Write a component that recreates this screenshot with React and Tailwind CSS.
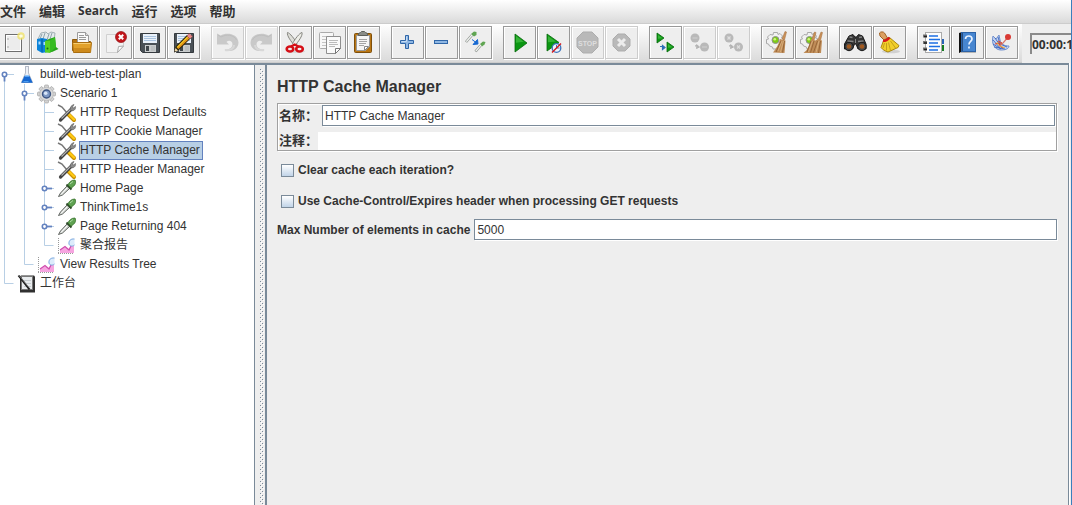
import React from 'react';

/* ---------- toolbar drawings, all on a 23 x 23 grid ---------- */

const Svg = ({ children }) => (
  <svg viewBox="0 0 23 23" className="block size-[23px]" aria-hidden="true">
    {children}
  </svg>
);

const NewIcon = () => (
  <Svg>
    <rect x="3.5" y="3.5" width="16" height="17" fill="#e9e9e9" stroke="#6f6f6f" />
    <rect x="4.5" y="4.5" width="14" height="15" fill="#ececec" stroke="#fff" />
    <path d="M5 8h2M5 16h2" stroke="#aaa" />
    <circle cx="19" cy="5" r="3.800" fill="#f1e36a" opacity=".8" />
    <circle cx="19" cy="5" r="1.8" fill="#fffde0" />
  </Svg>
);

const TemplatesIcon = () => (
  <Svg>
    <path d="M2 8l3-6 5-1 2 2 3-2 4 1-1 8-9 4z" fill="#e4eaec" stroke="#a3b0b5" />
    <path d="M6 3l-2 5M9 2L7 8M13 3l-2 6M16 2l-2 6" stroke="#8fa3ab" />
    <path d="M1 8l5-1 5 1v13l-5 1-5-3z" fill="#0c83d9" />
    <path d="M6 8v13" stroke="#075a9d" fill="none" />
    <path d="M2.500 10.500h2v3h-2zM7.500 11h2v3h-2z" fill="#a9dcff" />
    <path d="M9 10l4-2 6-2 1 10 2.500 2-6.500 3-7 .5z" fill="#27a31b" />
    <path d="M9 10l5-.5V22l-5-1z" fill="#58d126" />
    <path d="M14 9.500l5-3.500 1 10-6 6z" fill="#35bc20" />
    <circle cx="11.500" cy="17.500" r="1" fill="#176b0e" />
  </Svg>
);

const OpenIcon = () => (
  <Svg>
    <path d="M2.500 8.500h6l1 2h11v9h-18z" fill="#b87512" stroke="#8e5a0c" />
    <path d="M7.500 1.500h8l3 3v9h-11z" fill="#fafafa" stroke="#9a9a9a" />
    <path d="M9 4.500h5M9 6.500h7M9 8.500h7" stroke="#999" />
    <path d="M15.500 1.500v3h3" fill="#ddd" stroke="#9a9a9a" />
    <path d="M2.500 11.500h19l-1 10h-17z" fill="#e2a12b" stroke="#a96d10" />
    <path d="M3.500 12.500h17" stroke="#f6cd72" />
    <path d="M4 17h17l-.5 4h-16z" fill="#cd8a1c" />
  </Svg>
);

const CloseIcon = () => (
  <Svg>
    <path d="M2.500 3.500h17v12l-6 6h-11z" fill="#f2f2f2" stroke="#d0d0d0" />
    <path d="M13.500 21.500l1-6 5-.5z" fill="#fff" stroke="#aaa" />
    <circle cx="17" cy="6" r="5.500" fill="#c3161b" stroke="#8f1013" strokeWidth=".7" />
    <path d="M14.800 3.800l4.400 4.400M19.200 3.800l-4.400 4.400" stroke="#fff" strokeWidth="2" />
  </Svg>
);

const Floppy = () => (
  <g>
    <path d="M2.500 2.500h19v19h-17l-2-2z" fill="#4a5157" stroke="#353a3e" />
    <rect x="5" y="3" width="14" height="9" fill="#e9f1fa" />
    <path d="M6 5.500h12M6 7.500h12M6 9.500h12" stroke="#a9c3df" />
    <rect x="7" y="14" width="11" height="7" fill="#c9cccd" />
    <rect x="8" y="15" width="3" height="5" fill="#3f464b" />
    <path d="M14 15v5M16 15v5" stroke="#aeb2b4" />
  </g>
);

const SaveIcon = () => (
  <Svg>
    <Floppy />
  </Svg>
);

const SaveAsIcon = () => (
  <Svg>
    <Floppy />
    <path d="M2 21l2-6L15 4l4 3L7 19z" fill="#2a2208" />
    <path d="M4.500 16L15.500 5l1.500 1.300L6 17.500z" fill="#f4c323" />
    <path d="M6.500 18L18 7l-1-1L5.500 17z" fill="#e69318" />
    <path d="M15 5l2-2.500 3.500 2.800L18 8z" fill="#e98b8b" stroke="#8d3b3b" strokeWidth=".5" />
    <path d="M2 21.500l1.500-4.500 2.500 2.500z" fill="#f0d9a8" />
    <path d="M2 21.500l.6-2 1.300 1.200z" fill="#111" />
  </Svg>
);

const UndoShape = () => (
  <g>
    <path
      d="M1 2.500l3.500 2C10 1 22 2 22.500 11.500c0 5-4 8-8 8.500-3 0-5-.5-6-1.500 4 .5 8-1.500 8-5 0-4-4-4.500-6-2.500l2.500 2.500H1z"
      fill="#c9c9c9"
    />
    <path d="M2 4l3 2C10 3 18 3.500 20.500 9" fill="none" stroke="#bebebe" />
    <path d="M9 19c4 1 9-1 9-5" fill="none" stroke="#d8d8d8" strokeWidth="2" />
  </g>
);

const UndoIcon = () => (
  <Svg>
    <UndoShape />
  </Svg>
);

const RedoIcon = () => (
  <Svg>
    <g transform="translate(23 0) scale(-1 1)">
      <UndoShape />
    </g>
  </Svg>
);

const CutIcon = () => (
  <Svg>
    <ellipse cx="12" cy="20.500" rx="9" ry="1.500" fill="#d5d5d5" />
    <path d="M3.500 1.500c-1 3 4 9.500 7 13l2.500-2C10.500 8 6 2 3.500 1.500z" fill="#deded8" stroke="#85857f" strokeWidth="1" />
    <path d="M18 1.500c1 3-4 9.500-7 13l-2.500-2C11 8 15.500 2 18 1.500z" fill="#eeeee8" stroke="#85857f" strokeWidth="1" />
    <ellipse cx="6" cy="18" rx="3.300" ry="2.500" fill="#eee" stroke="#d50f16" strokeWidth="2.600" />
    <ellipse cx="15.500" cy="18" rx="3.300" ry="2.500" fill="#eee" stroke="#d50f16" strokeWidth="2.600" />
    <path d="M7 15.500l3.700-2 3.800 2" stroke="#d50f16" strokeWidth="2" fill="none" />
  </Svg>
);

const CopyIcon = () => (
  <Svg>
    <rect x="1.500" y="1.500" width="14" height="16" rx="1" fill="#f7f7f7" stroke="#aaa" />
    <path d="M4 5.500h9M4 8.500h4M4 11.500h4M4 14.500h4" stroke="#c4c4c4" />
    <path d="M8.500 5.500h14v12l-5 5h-9z" fill="#fafafa" stroke="#8f8f8f" />
    <path d="M11 9.500h9M11 11.500h8M11 13.500h9M11 15.500h6" stroke="#bbb" />
    <path d="M17.500 22.500v-5h5z" fill="#fff" stroke="#777" />
  </Svg>
);

const PasteIcon = () => (
  <Svg>
    <rect x="2.500" y="2.500" width="17" height="19" rx="1" fill="#b97613" stroke="#7d4e0b" />
    <path d="M4.500 4.500h13v11l-4 4h-9z" fill="#f6f6f6" stroke="#999" />
    <path d="M7 8.500h8M7 10.500h8M7 12.500h7M7 14.500h5" stroke="#a5a5a5" />
    <path d="M12.500 19.500v-4h4z" fill="#fff" stroke="#888" />
    <path d="M6.500 4.500v-2l2-1 1-1h3l1 1 2 1v2z" fill="#8a8d88" stroke="#5c5f5a" />
  </Svg>
);

const PlusIcon = () => (
  <Svg>
    <path d="M9.500 4.500h3v5h5v3h-5v5h-3v-5h-5v-3h5z" fill="#8fb7e3" stroke="#2f66a8" />
    <path d="M10.500 5.500v5h-5" fill="none" stroke="#c5dcf4" />
  </Svg>
);

const MinusIcon = () => (
  <Svg>
    <rect x="4.500" y="9.500" width="13" height="3" fill="#8fb7e3" stroke="#2f66a8" />
  </Svg>
);

const ToggleIcon = () => (
  <Svg>
    <path d="M2 11l6-7" stroke="#8a8f8a" strokeWidth="2.600" />
    <path d="M2.300 10.600l6-7" stroke="#f4f7f4" strokeWidth="1.400" />
    <path d="M7 3l3-2.500 2.500.5v3L10 5.500z" fill="#60a552" />
    <path d="M11.500 20.500l5-6" stroke="#8a8f8a" strokeWidth="2.600" />
    <path d="M11.800 20.100l5-6" stroke="#f4f7f4" strokeWidth="1.400" />
    <path d="M16 13l3-2.500 2.500.5-1 2.500-2.500 2z" fill="#60a552" />
    <path d="M8 8.500l4 3M13.500 8.500l.5 4.500-5 .5z" stroke="#1769d2" fill="#1769d2" />
  </Svg>
);

const Triangle = ({ x, y, w, h }) => (
  <g>
    <path d={`M${x} ${y}l${w} ${h / 2}l${-w} ${h / 2}z`} fill="#0b9612" stroke="#08690c" strokeWidth=".8" />
    <path d={`M${x + 1} ${y + 2}l${w * 0.65} ${h * 0.32}l${-w * 0.65} ${h * 0.05}z`} fill="#4cc54a" opacity=".65" />
  </g>
);

const StartIcon = () => (
  <Svg>
    <Triangle x={7} y={3} w={12} h={18} />
  </Svg>
);

const StartNoPauseIcon = () => (
  <Svg>
    <Triangle x={5} y={3} w={12} h={17} />
    <circle cx="14.500" cy="17" r="4.300" fill="#eef4fc" stroke="#3b72bb" strokeWidth="1.300" />
    <path d="M14.500 14v3h3" fill="none" stroke="#3b72bb" />
    <path d="M10 21.500l9-9" stroke="#d4171d" strokeWidth="1.500" />
  </Svg>
);

const StopIcon = () => (
  <Svg>
    <path d="M7 1h9l6 6v9l-6 6H7l-6-6V7z" fill="#b9b9b9" stroke="#adadad" />
    <text
      x="11.500"
      y="15"
      textAnchor="middle"
      fontSize="7"
      fontWeight="700"
      fill="#dedede"
      className="font-['Liberation_Sans',sans-serif]"
    >
      STOP
    </text>
  </Svg>
);

const ShutdownIcon = () => (
  <Svg>
    <path d="M8 3h7l5 5v7l-5 5H8l-5-5V8z" fill="#b9b9b9" stroke="#adadad" />
    <path d="M8 8l7 7M15 8l-7 7" stroke="#ececec" strokeWidth="3" />
  </Svg>
);

const RemoteStartIcon = () => (
  <Svg>
    <Triangle x={3} y={2} w={7} h={10} />
    <Triangle x={13} y={11} w={7} h={10} />
    <path d="M6 15.500h3M8.500 14.500l2.500 2-2.500 2z" stroke="#2e6fb7" strokeWidth="1.200" fill="#2e6fb7" />
  </Svg>
);

const RemoteArrow = () => <path d="M7 15h2l-.5 2.500 3-1.500-3-2.500" stroke="#b3b3b3" fill="#b3b3b3" />;

const RemoteStopIcon = () => (
  <Svg>
    <circle cx="7" cy="7" r="4.500" fill="#b9b9b9" />
    <circle cx="16.500" cy="16" r="4.500" fill="#b9b9b9" />
    <path d="M4.500 7h5M14 16h5" stroke="#c9c9c9" strokeWidth="1.500" />
    <RemoteArrow />
  </Svg>
);

const RemoteShutdownIcon = () => (
  <Svg>
    <circle cx="7" cy="7" r="4.500" fill="#b9b9b9" />
    <circle cx="16.500" cy="16" r="4.500" fill="#b9b9b9" />
    <path d="M5.500 5.500l3 3M8.500 5.500l-3 3M15 14.500l3 3M18 14.500l-3 3" stroke="#dedede" strokeWidth="1.200" />
    <RemoteArrow />
  </Svg>
);

const GearBase = () => (
  <g>
    <path
      d="M7.500 1.500h4l.5 2 2-1 2.500 2.500-1 2 2 .5v4l-2 .5-1 3-3 1-.5 2h-4l-.5-2-3-1-1-2-2-.5v-4l2-.5-1-2L4 3.500l3 .5z"
      fill="#f1f1f1"
      stroke="#a9a9a9"
    />
    <circle cx="9.500" cy="9" r="3.500" fill="#7ecb17" stroke="#8f8f8f" />
    <circle cx="8.800" cy="8.300" r="1.300" fill="#d0f47f" />
  </g>
);

const ClearIcon = () => (
  <Svg>
    <GearBase />
    <path d="M19 .5l1.500.5-2 8-2.500-1z" fill="#c99058" stroke="#a06c3a" strokeWidth=".5" />
    <path d="M14 8l5.500 1.500L18.500 22l-11.500-.5c3-4 6-8 7-13.500z" fill="#bf8c57" />
    <path d="M15 10l-5 11M18.500 10l-2 11.500" stroke="#8d5c30" strokeWidth=".8" />
    <path d="M16 10l-4 10M17.500 10l-3 11" stroke="#e1ba88" strokeWidth=".7" />
  </Svg>
);

const ClearAllIcon = () => (
  <Svg>
    <GearBase />
    <path d="M14.500 1l1.500.5-2 8-2.500-1zM21 1l1.500.5-2 8-2.500-1z" fill="#c99058" stroke="#a06c3a" strokeWidth=".5" />
    <path d="M11 8l4.500 1.500 2-1.500 4.500 1.500-1 12.500H3.500c4-3 6.500-8 7.500-14z" fill="#bf8c57" />
    <path d="M11 10L7 21M14 10l-3.500 11.500M17.500 10l-4 11.500M20.500 10l-2 12" stroke="#8d5c30" strokeWidth=".8" />
    <path d="M12.500 10l-4 11M19 10l-3 11.500" stroke="#e1ba88" strokeWidth=".7" />
  </Svg>
);

const SearchIcon = () => (
  <Svg>
    <path d="M5 5l4-1.500 2 2.500h1.500l2-2.500 4 1.500 3.500 8v5h-8l-2-5h-1.500l-2 5H.500v-5z" fill="#353535" stroke="#1b1b1b" />
    <path d="M5.500 6l3 .5M15 6.500l3-.5M3.500 10l6 .5M14 10.500l5.500-.5" stroke="#858585" strokeWidth="1.300" />
    <circle cx="5" cy="15.500" r="4.200" fill="#474747" stroke="#191919" />
    <circle cx="18" cy="15.500" r="4.200" fill="#474747" stroke="#191919" />
    <circle cx="5" cy="15.500" r="2.300" fill="#a25a20" />
    <circle cx="18" cy="15.500" r="2.300" fill="#a25a20" />
    <path d="M11.500 8v4" stroke="#888" />
  </Svg>
);

const BroomIcon = () => (
  <Svg>
    <ellipse cx="13" cy="20.500" rx="9" ry="1.800" fill="#d0d0d0" />
    <path d="M1.500 2c1-1.500 4-1.500 5 0l3 5-3.500 2-4-4z" fill="#dca062" stroke="#a26426" />
    <path d="M5.500 9.500l6-3 9.500 8-1 2-10 4.500c-3-1-5.500-2.500-7-4.500z" fill="#f1cf29" stroke="#a98712" />
    <path d="M6.500 12L5 17M8.500 12v7.500M10.500 11.500l2 8M12.500 10l5 7" stroke="#b99416" strokeWidth=".8" />
    <path d="M5 10c2 0 5-1.500 6.500-3.500" stroke="#d7191b" strokeWidth="2.200" fill="none" />
  </Svg>
);

const FunctionIcon = () => (
  <Svg>
    <rect x="3.500" y="1.500" width="16" height="20" fill="#fdfdfd" stroke="#aaa" />
    <rect x="20" y="8" width="2" height="5" fill="#2863b8" />
    <rect x="20" y="14" width="2" height="6" fill="#147b20" />
    <path d="M7 5h9M7 8.500h11M7 12h9M7 15.500h11M7 19h9" stroke="#1c6fe4" strokeWidth="1.300" />
    <path d="M1 5h4M1 11.500h4M1 18h4" stroke="#777" strokeWidth="3" />
    <path d="M2 5.500h3M2 12h3M2 18.500h3" stroke="#222" strokeWidth="1.500" />
  </Svg>
);

const HelpIcon = () => (
  <Svg>
    <path d="M3 2l3-1v20l-3 1z" fill="#111" />
    <rect x="5.500" y="1.500" width="14" height="19" fill="#4685d0" stroke="#2c62a6" />
    <path d="M4 21.500h16" stroke="#b5b5b5" />
    <path d="M6.500 2v18" stroke="#294e80" />
    <path
      d="M9.500 8c0-4 6.500-4 6.500 0 0 2.500-3 2.500-3 5.500M13 15.500v2"
      fill="none"
      stroke="#e7f1ff"
      strokeWidth="1.700"
    />
  </Svg>
);

const FeatherIcon = () => (
  <Svg>
    <path d="M3 5c-2 8 2 14 8 14 6 0 8-2 8-4-5 0-8-2-9-6L9 4 6 8z" fill="#c3d2f0" stroke="#6f8fce" />
    <path d="M3 9l8 9M5 7l7 10M8 6l3 10M3 13l8 5M4 16l11 2M8 12l9 4" stroke="#3c67c0" strokeWidth=".9" />
    <path d="M8 10l4 2-3 2 4 3M5 13l5-1" stroke="#e0442b" fill="none" />
    <path d="M9 15c4-1 5-6 9-8" stroke="#d8776b" fill="none" strokeWidth="1.300" />
    <path d="M10 15l5 2M7 11l2 4" stroke="#f0b03c" />
    <circle cx="18" cy="6" r="3" fill="#d93a34" />
  </Svg>
);

const toolGroups = [
  [
    ['New', NewIcon],
    ['Templates', TemplatesIcon],
    ['Open', OpenIcon],
    ['Close', CloseIcon],
    ['Save', SaveIcon],
    ['Save as', SaveAsIcon],
  ],
  [
    ['Undo', UndoIcon, true],
    ['Redo', RedoIcon, true],
    ['Cut', CutIcon],
    ['Copy', CopyIcon],
    ['Paste', PasteIcon],
  ],
  [
    ['Expand all', PlusIcon],
    ['Collapse all', MinusIcon],
    ['Toggle', ToggleIcon],
  ],
  [
    ['Start', StartIcon],
    ['Start no pauses', StartNoPauseIcon],
    ['Stop', StopIcon, true],
    ['Shutdown', ShutdownIcon, true],
  ],
  [
    ['Remote start all', RemoteStartIcon],
    ['Remote stop all', RemoteStopIcon, true],
    ['Remote shutdown all', RemoteShutdownIcon, true],
  ],
  [
    ['Clear', ClearIcon],
    ['Clear all', ClearAllIcon],
  ],
  [
    ['Search tree', SearchIcon],
    ['Reset search', BroomIcon],
  ],
  [
    ['Function helper', FunctionIcon],
    ['Help', HelpIcon],
    ['What is this node', FeatherIcon],
  ],
];

function ToolButton({ label, Icon, disabled }) {
  return (
    <button
      type="button"
      aria-label={label}
      disabled={disabled}
      className="flex size-[33px] shrink-0 items-center justify-center border border-[#999] bg-[#eee] shadow-[1px_1px_0_#fff,inset_1px_1px_0_#fff] disabled:border-[#ccc]"
    >
      <Icon />
    </button>
  );
}

/* ---------- tree ---------- */

const Cell = ({ kind }) => (
  <svg viewBox="0 0 20 19" className="h-[19px] w-5 shrink-0" aria-hidden="true">
    {['pipe', 'tee', 'open', 'closed'].includes(kind) && <path d="M4.500 0v19" stroke="#b8cfe5" />}
    {kind === 'end' && <path d="M4.500 0v9.500h9" fill="none" stroke="#b8cfe5" />}
    {kind === 'first' && <path d="M4.500 9v10" stroke="#b8cfe5" />}
    {kind !== 'pipe' && kind !== 'end' && <path d="M4 9.500h10" stroke="#b8cfe5" />}
    {(kind === 'open' || kind === 'first') && (
      <g>
        <circle cx="4.500" cy="9.500" r="2.200" fill="#fff" stroke="#6382bf" strokeWidth="1.600" />
        <path d="M4.500 12v4.500" stroke="#6382bf" strokeWidth="1.800" />
      </g>
    )}
    {kind === 'closed' && (
      <g>
        <circle cx="4.500" cy="9.500" r="2.200" fill="#fff" stroke="#6382bf" strokeWidth="1.600" />
        <path d="M7 9.500h5" stroke="#6382bf" strokeWidth="1.800" />
      </g>
    )}
  </svg>
);

const TreeSvg = ({ children }) => (
  <svg viewBox="0 0 20 19" className="h-[19px] w-5 shrink-0 overflow-visible" aria-hidden="true">
    {children}
  </svg>
);

const FlaskIcon = () => (
  <TreeSvg>
    <path d="M5 1.500h4M5.500 2v6L1.500 17.500h11L8.500 8V2" fill="#edf1f7" stroke="#b4bac6" />
    <path d="M4.500 11h5l3.200 6.800H1.300z" fill="#1668d1" />
    <path d="M5 11h4" stroke="#72b7fb" strokeWidth="1.500" />
    <path d="M3.500 16.500h5" stroke="#4b9cf0" />
  </TreeSvg>
);

const GearIcon = () => (
  <TreeSvg>
    <g transform="translate(6.500 10)">
      {[0, 45, 90, 135, 180, 225, 270, 315].map((a) => (
        <rect key={a} x="-2" y="-9" width="4" height="5" rx="1" fill="#d3d3d3" stroke="#999" strokeWidth=".6" transform={`rotate(${a})`} />
      ))}
      <circle r="6.700" fill="#dadada" stroke="#aaa" strokeWidth=".5" />
      <circle r="4" fill="#7d98c4" stroke="#3d5683" strokeWidth="1.400" />
      <circle cx="-.8" cy="-.8" r="1.800" fill="#d8e5f7" />
    </g>
  </TreeSvg>
);

const ToolsIcon = () => (
  <TreeSvg>
    <path d="M-2 2l4 2 5 6" stroke="#777" strokeWidth="1.500" fill="none" />
    <path d="M8 11l6 6" stroke="#c68e00" strokeWidth="4" strokeLinecap="round" />
    <path d="M8.500 11l5.500 5.500" stroke="#ffc914" strokeWidth="2.400" strokeLinecap="round" />
    <path d="M.5 17L11.500 6" stroke="#444" strokeWidth="3.200" strokeLinecap="round" />
    <path d="M1.500 15.500L11 6" stroke="#b5b5b5" strokeWidth="1.100" />
    <path d="M15.500 3.500c.5 3-2 5-4.500 4-1.500-2-.5-5 3-6l-1.500 2.500 1 1z" fill="#8b8b8b" stroke="#555" strokeWidth=".6" />
  </TreeSvg>
);

const DropperIcon = () => (
  <TreeSvg>
    <path d="M-1.500 17.500L.5 14l7-7.500L10 9l-7.500 7z" fill="#d6dad6" stroke="#5f635f" strokeWidth="1" />
    <path d="M1 15.500l6-6.500" stroke="#fff" />
    <path d="M6.500 5.500l5 5" stroke="#2d4a28" strokeWidth="2" />
    <path d="M8 6c1-3 3.500-5 7-5 1.500 3 0 6-4 8z" fill="#5fa251" stroke="#35702a" strokeWidth=".8" />
    <path d="M10 5l3-2.500" stroke="#b1dba7" />
  </TreeSvg>
);

const ReportIcon = () => (
  <TreeSvg>
    <path d="M-1.500 2v16M-2 17.500h16" stroke="#999" strokeDasharray="1 1" />
    <path d="M0 17v-3l5-3 4 2 2-4 3 1v7z" fill="#f6a5e0" />
    <path d="M0 14l5-3.500 4 3.500 2-4" stroke="#cf4cae" fill="none" strokeWidth="1.200" />
    <path d="M14.500 3c-4-.5-6 2-5.500 5 .5 2 3 3 5.500 1z" fill="#dcebfb" />
    <path d="M14.500 3c-4-.5-6 2-5.500 5 .5 2 3 3 5.500 1" fill="none" stroke="#7aa9e0" />
  </TreeSvg>
);

const WorkbenchIcon = () => (
  <TreeSvg>
    <path d="M0 2.500l1-1h13l1 1v16H0z" fill="#303030" />
    <rect x="1.500" y="2.500" width="11" height="13" fill="#e9ecee" stroke="#777" />
    <path d="M4 6.500h7M4 9.500h7M4 12.500h7" stroke="#c6ccd0" />
    <path d="M-1.500 1.500L9.500 15.500" stroke="#1b1b1b" strokeWidth="2" />
    <path d="M-1 1.500l10 12" stroke="#8b8b8b" strokeWidth=".7" />
  </TreeSvg>
);

const nodes = [
  ['build-web-test-plan', ['first'], FlaskIcon],
  ['Scenario 1', ['pipe', 'open'], GearIcon],
  ['HTTP Request Defaults', ['pipe', 'pipe', 'tee'], ToolsIcon],
  ['HTTP Cookie Manager', ['pipe', 'pipe', 'tee'], ToolsIcon],
  ['HTTP Cache Manager', ['pipe', 'pipe', 'tee'], ToolsIcon],
  ['HTTP Header Manager', ['pipe', 'pipe', 'tee'], ToolsIcon],
  ['Home Page', ['pipe', 'pipe', 'closed'], DropperIcon],
  ['ThinkTime1s', ['pipe', 'pipe', 'closed'], DropperIcon],
  ['Page Returning 404', ['pipe', 'pipe', 'closed'], DropperIcon],
  ['聚合报告', ['pipe', 'pipe', 'end'], ReportIcon],
  ['View Results Tree', ['pipe', 'end'], ReportIcon],
  ['工作台', ['end'], WorkbenchIcon],
];

function Tree() {
  return (
    <ul className="flex flex-col" role="tree">
      {nodes.map(([label, cells, Icon]) => {
        const selected = label === 'HTTP Cache Manager';
        return (
          <li key={label} role="treeitem" aria-selected={selected} className="flex h-[19px] items-center">
            {cells.map((kind, i) => (
              <Cell key={i} kind={kind} />
            ))}
            <Icon />
            <span
              className={
                selected
                  ? '-ml-px border border-[#6382bf] bg-[#b8cfe5] pr-0.5 leading-[17px] whitespace-nowrap'
                  : 'leading-[19px] whitespace-nowrap'
              }
            >
              {label}
            </span>
          </li>
        );
      })}
    </ul>
  );
}

/* Grip dots of the split-pane divider */
const Grip = () => (
  <svg className="mt-1 h-full w-1.5" aria-hidden="true">
    <defs>
      <pattern id="grip" width="6" height="4" patternUnits="userSpaceOnUse">
        <path d="M1 0h1v1H1zM3 2h1v1H3z" fill="#7a8a99" />
        <path d="M2 1h1v1H2zM4 3h1v1H4z" fill="#fff" />
      </pattern>
    </defs>
    <rect width="6" height="100%" fill="url(#grip)" />
  </svg>
);

/* ---------- form ---------- */

const fieldClass =
  'h-[21px] min-w-0 flex-1 rounded-none border border-[#7a8a99] bg-white px-0.5 text-xs text-[#333] shadow-[1px_1px_0_#fff] outline-none';

const checkClass =
  'size-[13px] shrink-0 appearance-none border border-[#7a8a99] bg-linear-to-b from-white to-[#c1d4e8]';

const menus = ['文件', '编辑', 'Search', '运行', '选项', '帮助'];

export default function App() {
  return (
    <div className="flex h-screen overflow-hidden border-r border-[#3a7fbd] bg-[#eee] font-['Liberation_Sans','Noto_Sans_CJK_SC',sans-serif] text-xs text-[#333]">
      <div className="flex min-w-0 flex-1 flex-col">
        <nav className="flex h-[23px] shrink-0 items-start gap-[13px] bg-linear-to-b from-white to-[#dadada] font-['Open_Sans','Noto_Sans_CJK_SC',sans-serif] font-bold">
          {menus.map((m) => (
            <button
              key={m}
              type="button"
              className={m === 'Search' ? 'text-xs leading-[22px]' : 'text-[13px] leading-[22px]'}
            >
              {m}
            </button>
          ))}
        </nav>

        <div className="flex h-10 shrink-0 items-stretch overflow-hidden border-t border-[#ccc]">
          <div className="-ml-[3px] flex shrink-0 items-start gap-[11px] border-b border-[#ccc] bg-linear-to-b from-white to-[#dadada] pt-0.5 pr-1">
            {toolGroups.map((group, i) => (
              <div key={i} className="flex gap-px">
                {group.map(([label, Icon, disabled]) => (
                  <ToolButton key={label} label={label} Icon={Icon} disabled={disabled} />
                ))}
              </div>
            ))}
          </div>
          <div className="ml-2 flex min-w-0 flex-1 items-center overflow-hidden">
            <input
              aria-label="Elapsed time"
              readOnly
              value="00:00:11"
              className="h-[21px] w-16 shrink-0 border-t-2 border-l-2 border-[#8a8a8a] bg-[#eee] font-['Open_Sans',sans-serif] text-xs font-bold outline-none"
            />
          </div>
        </div>

        <main className="flex min-h-0 flex-1">
          <aside className="w-[255px] shrink-0 overflow-hidden border-t-2 border-r border-[#7a8a99] bg-white">
            <Tree />
          </aside>
          <div className="flex w-2.5 shrink-0 justify-end overflow-hidden border-t-2 border-[#7a8a99]">
            <Grip />
          </div>
          <section className="mr-0.5 min-w-0 flex-1 border-t-2 border-r border-l-2 border-[#7a8a99] pr-[11px] pl-2.5 shadow-[1px_0_0_#fff]">
            <h1 className="mt-3 text-base leading-5 font-bold">HTTP Cache Manager</h1>

            <div className="mt-1.5 flex flex-col gap-1.5 border border-[#a0a0a0] pt-px shadow-[1px_1px_0_#fff,inset_1px_1px_0_#fff]">
              <div className="flex items-center pr-px pl-px">
                <label htmlFor="name" className="w-[43px] text-[13px] leading-[21px] font-bold">
                  名称：
                </label>
                <input id="name" defaultValue="HTTP Cache Manager" className={fieldClass} />
              </div>
              <div className="flex items-center pl-px">
                <label htmlFor="comment" className="w-[39px] text-[13px] leading-[18px] font-bold">
                  注释：
                </label>
                <input id="comment" className="h-[18px] min-w-0 flex-1 bg-white px-0.5 outline-none" />
              </div>
            </div>

            <div className="mt-2.5 flex h-[18px] items-center gap-1 pl-1">
              <input id="clear" type="checkbox" className={checkClass} />
              <label htmlFor="clear" className="font-bold">
                Clear cache each iteration?
              </label>
            </div>
            <div className="mt-[13px] flex h-[18px] items-center gap-1 pl-1">
              <input id="expires" type="checkbox" className={checkClass} />
              <label htmlFor="expires" className="font-bold">
                Use Cache-Control/Expires header when processing GET requests
              </label>
            </div>
            <div className="mt-[9px] flex items-center gap-1">
              <label htmlFor="max" className="font-bold whitespace-nowrap">
                Max Number of elements in cache
              </label>
              <input id="max" defaultValue="5000" className={fieldClass} />
            </div>
          </section>
        </main>
      </div>
    </div>
  );
}
